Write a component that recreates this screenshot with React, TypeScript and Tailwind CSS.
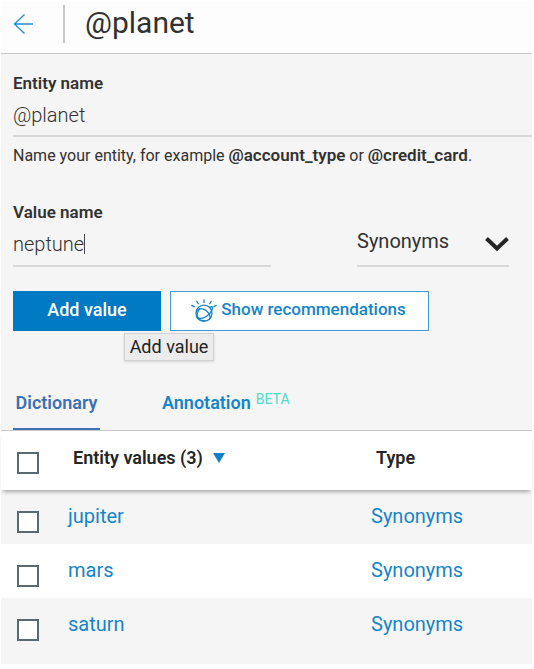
import { useState } from "react";

const VALUES = ["jupiter", "mars", "saturn"];

function Checkbox({ label }: { label: string }) {
  return (
    <input
      type="checkbox"
      aria-label={label}
      className="block size-[22px] appearance-none border-2 border-[#5a6872] bg-white checked:bg-[#5a6872]"
    />
  );
}

function WatsonIcon() {
  return (
    <svg
      aria-hidden="true"
      viewBox="0 0 26 24"
      className="h-6 w-[26px] shrink-0"
      fill="none"
      stroke="currentColor"
      strokeWidth="1.3"
      strokeLinecap="round"
    >
      <circle cx="13" cy="14.200" r="8" />
      <path d="M5.600 11.500c3.400-3 8.600-1.800 11.600 2.200 2.400 3.400 2.300 6.200.600 7" />
      <path d="M18.600 8.400c2.600-1.400 3.800-.400 2.400 2.600-2 4.400-7.400 8.600-11.800 8.400-4-.200-4.400-5-.600-9.600" />
      <path d="M5.800 17.500c-.6 2.600 4.400 4 8.200 4.500" />
      <path d="M.8 6.400l2.600 1.500M5.800 2.400l1.500 2.300M13 1v2.500M20.200 2.400l-1.500 2.300M25.200 6.400l-2.400 1.400" />
    </svg>
  );
}

export default function App() {
  const [name, setName] = useState("@planet");
  const [value, setValue] = useState("neptune");

  return (
    <main className="bg-white py-px pr-[2px] pl-px font-['Roboto',sans-serif] text-[#323232]">
      <header className="flex h-[53px] items-center border-b border-[#c8c8c8] bg-[#fdfdfd] pb-[6px] pl-3">
        <button type="button" aria-label="Back" className="text-[#1f8dcf]">
          <svg viewBox="0 0 20 20" className="size-5" fill="none" stroke="currentColor" strokeWidth="1.3">
            <path d="M20 10H1M11.500 .5L1.500 10l10 9.500" />
          </svg>
        </button>
        <div className="mr-5 ml-[30px] h-[38px] w-[2px] bg-[#c8c8c8]" />
        <h1 className="pb-[2px] text-3xl leading-9">@planet</h1>
      </header>

      <section className="bg-[#f5f5f5] pt-[19px] pl-3">
        <label htmlFor="entity" className="block text-[17px] leading-5 font-semibold">
          Entity name
        </label>
        <input
          id="entity"
          value={name}
          onChange={(e) => setName(e.target.value)}
          className="mt-2 block h-9 w-full border-b-2 border-[#d8d8d8] bg-transparent pb-[6px] text-xl font-light text-[#323232] outline-none"
        />
        <p className="mt-2 text-base leading-5">
          Name your entity, for example <b className="text-[17px] font-semibold">@account_type</b> or{" "}
          <b className="text-[17px] font-semibold">@credit_card</b>.
        </p>

        <div className="mt-9 flex items-end">
          <div className="w-[258px]">
            <label htmlFor="value" className="block text-[17px] leading-5 font-semibold">
              Value name
            </label>
            <div className="mt-2 flex h-[37px] items-start border-b-2 border-[#d8d8d8]">
              <input
                id="value"
                value={value}
                onChange={(e) => setValue(e.target.value)}
                className="field-sizing-content h-7 bg-transparent text-xl font-light text-[#323232] caret-transparent outline-none"
              />
              <span aria-hidden="true" className="mt-1 h-5 w-px bg-[#464646]" />
            </div>
          </div>
          <div className="relative ml-[86px] w-[152px]">
            <select
              aria-label="Value type"
              className="block h-[42px] w-full appearance-none border-b-2 border-[#d8d8d8] bg-transparent pb-2 text-xl outline-none"
            >
              <option>Synonyms</option>
              <option>Patterns</option>
            </select>
            <svg
              aria-hidden="true"
              viewBox="0 0 24 15"
              className="pointer-events-none absolute top-3 right-0 h-[15px] w-6"
              fill="none"
              stroke="#252525"
              strokeWidth="4"
            >
              <path d="M1.500 1.500L12 11.500l10.500-10" />
            </svg>
          </div>
        </div>

        <div className="mt-6 flex gap-[9px]">
          <div className="relative">
            <button type="button" className="h-10 w-[148px] bg-[#007ac3] pb-[2px] text-lg font-medium text-white">
              Add value
            </button>
            <div
              role="tooltip"
              className="absolute top-[42px] left-[111px] flex h-[28px] w-[90px] items-center justify-center border border-[#d2d2d2] bg-[#ececec] text-lg whitespace-nowrap text-[#222] shadow"
            >
              Add value
            </div>
          </div>
          <button
            type="button"
            className="flex h-10 w-[259px] items-center justify-center gap-1 border border-[#3f9bd6] bg-white pr-[2px] text-[#1585c9]"
          >
            <WatsonIcon />
            <span className="pb-[2px] text-[17px] font-medium">Show recommendations</span>
          </button>
        </div>

        <div role="tablist" className="mt-[60px] flex text-lg leading-6 font-semibold">
          <button
            type="button"
            role="tab"
            aria-selected="true"
            className="h-[39px] w-[87px] border-b-2 border-[#3d70b2] pb-[13px] text-[#3d70b2]"
          >
            Dictionary
          </button>
          <button type="button" role="tab" aria-selected="false" className="ml-[62px] flex h-[39px] gap-[5px] text-[#1585c9]">
            Annotation
            <span className="text-sm leading-4 font-normal text-[#4fdcc8]">BETA</span>
          </button>
        </div>
      </section>

      <table className="w-full table-fixed border-collapse text-left">
        <thead className="relative bg-white shadow-[0_4px_4px_-2px_#00000050]">
          <tr className="h-[59px] border-t border-[#c8c8c8] align-top text-lg leading-6 font-semibold text-[#252525]">
            <th className="w-[67px] pt-[21px] pl-4">
              <Checkbox label="Select all values" />
            </th>
            <th className="pt-[15px] pl-[5px] font-semibold">
              <span className="flex items-center gap-[10px]">
                Entity values (3)
                <svg aria-hidden="true" viewBox="0 0 12 10" className="h-[10px] w-3 fill-[#1080c8]">
                  <path d="M0 0h12L6 10z" />
                </svg>
              </span>
            </th>
            <th className="w-[161px] pt-[15px] pl-[5px] font-semibold">Type</th>
          </tr>
        </thead>
        <tbody className="text-xl leading-6 text-[#1585c9]">
          {VALUES.map((v) => (
            <tr key={v} className="h-[54px] align-top odd:bg-[#f5f5f5] even:bg-white last:h-[66px]">
              <td className="pt-[21px] pl-4">
                <Checkbox label={`Select ${v}`} />
              </td>
              <td className="pt-[14px]">
                <a href={`#${v}`}>{v}</a>
              </td>
              <td className="pt-[14px]">
                <a href={`#${v}-synonyms`}>Synonyms</a>
              </td>
            </tr>
          ))}
        </tbody>
      </table>
    </main>
  );
}
